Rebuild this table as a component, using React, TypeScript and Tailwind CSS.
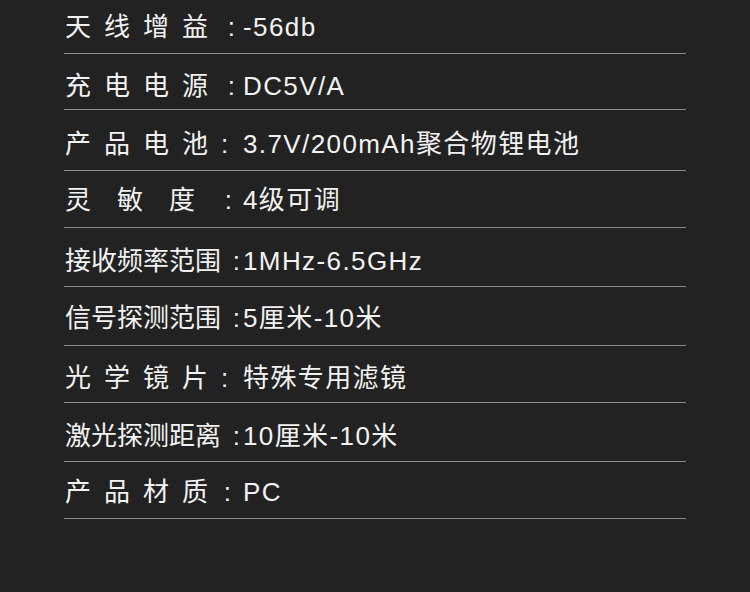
const specs = [
  { label: '天线增益', value: '-56db', row: 'h-[54px] pb-[11px]', lab: 'tracking-[13px]', colon: 'pr-[6px]' },
  { label: '充电电源', value: 'DC5V/A', row: 'h-[56px] pb-[8px]', lab: 'tracking-[13px]', colon: 'pr-[6px]' },
  { label: '产品电池', value: '3.7V/200mAh聚合物锂电池', row: 'h-[61px] pb-[11px]', lab: 'tracking-[13px]', colon: 'pr-[14px]' },
  { label: '灵敏度', value: '4级可调', row: 'h-[57px] pb-[12px]', lab: 'tracking-[26px]', colon: 'pr-[9px]' },
  { label: '接收频率范围', value: '1MHz-6.5GHz', row: 'h-[59px] pb-[10px]', lab: '', colon: 'pr-[1px]' },
  { label: '信号探测范围', value: '5厘米-10米', row: 'h-[59px] pb-[12px]', lab: '', colon: 'pr-[1px]' },
  { label: '光学镜片', value: '特殊专用滤镜', row: 'h-[57px] pb-[9px]', lab: 'tracking-[13px]', colon: 'pr-[22px]' },
  { label: '激光探测距离', value: '10厘米-10米', row: 'h-[59px] pb-[10px]', lab: '', colon: 'pr-[1px]' },
  { label: '产品材质', value: 'PC', row: 'h-[57px] pb-[11px]', lab: 'tracking-[13px]', colon: 'pr-[10px]' },
]

function SpecRow({ spec }: { spec: (typeof specs)[number] }) {
  return (
    <div className={`flex items-end border-b border-[#8a8a8a] pl-[1px] whitespace-nowrap ${spec.row}`}>
      <div className="flex w-[176px] shrink-0 justify-between leading-[30px]">
        <span className={spec.lab}>{spec.label}</span>
        <span className={spec.colon}>:</span>
      </div>
      <span className="ml-[2px] leading-[30px] tracking-[1.4px]">{spec.value}</span>
    </div>
  )
}

export default function App() {
  return (
    <div
      className="h-[592px] w-[750px] overflow-hidden bg-[#222222] text-[26px] text-[#f2f2f2]"
      style={{ fontFamily: '"Liberation Sans", "Noto Sans CJK SC", sans-serif' }}
    >
      <div className="ml-[64px] w-[622px]">
        {specs.map((spec) => (
          <SpecRow key={spec.label + spec.value} spec={spec} />
        ))}
      </div>
    </div>
  )
}
